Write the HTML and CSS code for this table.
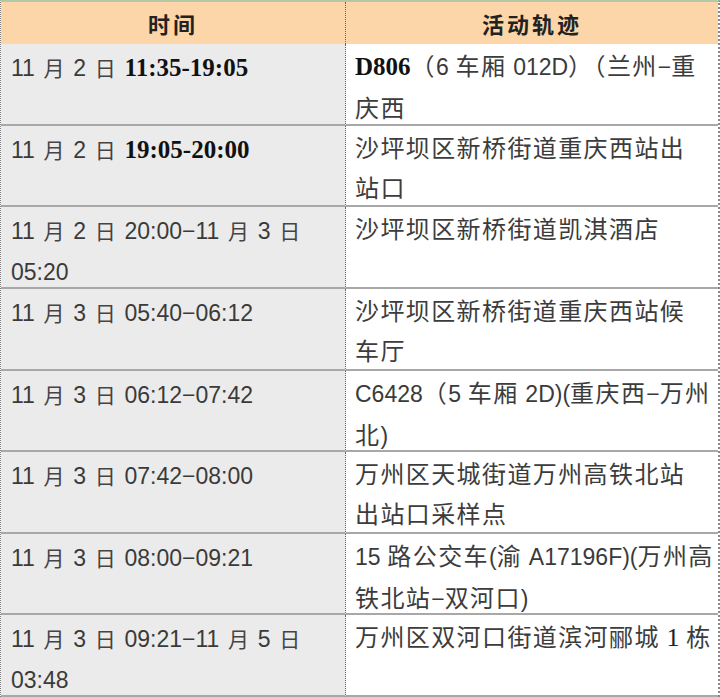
FILE: index.html
```html
<!DOCTYPE html>
<html lang="zh-CN">
<head>
<meta charset="utf-8">
<title>活动轨迹</title>
<link rel="stylesheet" href="styles.css">
</head>
<body>
<div class="table">
  <div class="head left">时间</div>
  <div class="head right">活动轨迹</div>

  <div class="cell left"><span class="n">11</span> 月 <span class="n">2</span> 日 <span class="b">11:35-19:05</span></div>
  <div class="cell right"><span class="b">D806</span>（<span class="n">6</span> 车厢 <span class="n">012D</span>）（兰州<span class="n">−</span>重<br>庆西</div>

  <div class="cell left"><span class="n">11</span> 月 <span class="n">2</span> 日 <span class="b">19:05-20:00</span></div>
  <div class="cell right">沙坪坝区新桥街道重庆西站出<br>站口</div>

  <div class="cell left"><span class="n">11</span> 月 <span class="n">2</span> 日 <span class="n">20:00−11</span> 月 <span class="n">3</span> 日<br><span class="n">05:20</span></div>
  <div class="cell right">沙坪坝区新桥街道凯淇酒店</div>

  <div class="cell left"><span class="n">11</span> 月 <span class="n">3</span> 日 <span class="n">05:40−06:12</span></div>
  <div class="cell right">沙坪坝区新桥街道重庆西站候<br>车厅</div>

  <div class="cell left"><span class="n">11</span> 月 <span class="n">3</span> 日 <span class="n">06:12−07:42</span></div>
  <div class="cell right"><span class="n">C6428</span>（<span class="n">5</span> 车厢 <span class="n">2D)(</span>重庆西<span class="n">−</span>万州<br>北<span class="n">)</span></div>

  <div class="cell left"><span class="n">11</span> 月 <span class="n">3</span> 日 <span class="n">07:42−08:00</span></div>
  <div class="cell right">万州区天城街道万州高铁北站<br>出站口采样点</div>

  <div class="cell left"><span class="n">11</span> 月 <span class="n">3</span> 日 <span class="n">08:00−09:21</span></div>
  <div class="cell right"><span class="n">15</span> 路公交车<span class="n">(</span>渝 <span class="n">A17196F)(</span>万州高<br>铁北站<span class="n">−</span>双河口<span class="n">)</span></div>

  <div class="cell left"><span class="n">11</span> 月 <span class="n">3</span> 日 <span class="n">09:21−11</span> 月 <span class="n">5</span> 日<br><span class="n">03:48</span></div>
  <div class="cell right">万州区双河口街道滨河郦城 <span class="s">1</span> 栋</div>
</div>
</body>
</html>
```

FILE: styles.css
```css
html, body {
  margin: 0;
  padding: 0;
  background: #ffffff;
}

.table {
  width: 720px;
  height: 697px;
  box-sizing: border-box;
  border-top: 2px solid #b3c8a6;
  border-left: 1px dotted #777777;
  border-right: 2px dotted #8a8a8a;
  display: grid;
  grid-template-columns: 345px 1fr;
  grid-template-rows: 42px repeat(8, 1fr);
}

.head {
  background: #fcd5a8;
  text-align: center;
  font-family: "Noto Sans CJK SC", sans-serif;
  font-weight: 700;
  font-size: 22px;
  letter-spacing: 3px;
  line-height: 42px;
  color: #222222;
}

.cell {
  font-family: "Noto Sans CJK SC", sans-serif;
  font-size: 24px;
  line-height: 40px;
  color: #3c3c3c;
  white-space: nowrap;
  padding-left: 9px;
  border-bottom: 2px solid #a8a8a8;
  overflow: hidden;
}

.left {
  border-right: 1px dotted #666666;
}

.cell.left {
  background: #ebebeb;
  padding-left: 10px;
  padding-top: 3px;
  font-size: 21px;
  word-spacing: 4px;
  color: #444444;
}

.cell.right {
  padding-top: 1px;
  letter-spacing: 1.4px;
}

.n {
  font-family: "Liberation Sans", Arial, sans-serif;
  font-size: 23px;
  letter-spacing: 0;
  word-spacing: 0;
  color: #3a3a3a;
}

.b {
  font-family: "Liberation Serif", serif;
  font-weight: 700;
  font-size: 25px;
  letter-spacing: 0;
  word-spacing: 0;
  color: #111111;
}

.s {
  font-family: "Liberation Serif", serif;
  font-size: 26px;
  letter-spacing: 0;
  color: #222222;
}
```
